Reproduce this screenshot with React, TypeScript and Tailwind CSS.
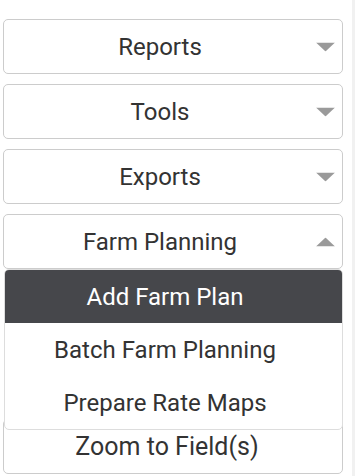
import React from "react";

function Caret({ up }: { up?: boolean }) {
  return (
    <svg
      width="19"
      height="9"
      viewBox="0 0 19 9"
      className="absolute right-[7px] top-1/2 -translate-y-1/2"
    >
      {up ? (
        <polygon points="0,9 9.5,0 19,9" fill="#9a9a9a" />
      ) : (
        <polygon points="0,0 19,0 9.5,9" fill="#9a9a9a" />
      )}
    </svg>
  );
}

function MenuButton({ label, up }: { label: string; up?: boolean }) {
  return (
    <button className="relative flex h-[55px] w-full items-center justify-center rounded-[5px] border border-[#cccccc] bg-white pr-[26px] text-[24px] text-[#333333]">
      {label}
      <Caret up={up} />
    </button>
  );
}

const items = ["Add Farm Plan", "Batch Farm Planning", "Prepare Rate Maps"];

export default function App() {
  return (
    <div
      className="flex h-[476px] w-[355px] bg-white"
      style={{ fontFamily: "Roboto, 'Liberation Sans', sans-serif" }}
    >
      <div className="flex w-[352px] flex-col gap-[10px] pl-[3px] pr-[9px] pt-[19px]">
        <MenuButton label="Reports" />
        <MenuButton label="Tools" />
        <MenuButton label="Exports" />
        <div className="relative">
          <MenuButton label="Farm Planning" up />
          <ul className="absolute left-[1px] right-0 top-full z-10 overflow-hidden rounded-[5px] border border-[#dddddd] bg-white">
            {items.map((item, i) => (
              <li
                key={item}
                className={`flex h-[53px] items-center justify-center pr-[17px] text-[24px] ${
                  i === 0 ? "bg-[#46474b] text-white" : "text-[#333333]"
                }`}
              >
                {item}
              </li>
            ))}
          </ul>
        </div>
        <div className="mt-[140px]">
          <button className="flex h-[55px] w-full items-center justify-center rounded-[5px] border border-[#cccccc] bg-white pr-[12px] text-[25px] text-[#333333]">
            Zoom to Field(s)
          </button>
        </div>
      </div>
      <div className="flex-1 bg-[#f1f1f1]" />
    </div>
  );
}
